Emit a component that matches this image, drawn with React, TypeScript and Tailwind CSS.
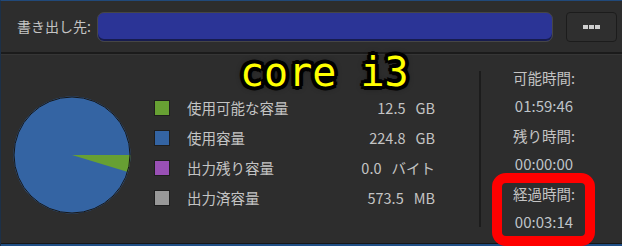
import React from "react";

const jp = "font-['Noto_Sans_CJK_JP','Noto_Sans',sans-serif]";

type LegendRow = { color: string; label: string; value: string; unit: string };

const legend: LegendRow[] = [
  { color: "bg-[#67a033]", label: "使用可能な容量", value: "12.5", unit: "GB" },
  { color: "bg-[#3464a3]", label: "使用容量", value: "224.8", unit: "GB" },
  { color: "bg-[#9950b5]", label: "出力残り容量", value: "0.0", unit: "バイト" },
  { color: "bg-[#989898]", label: "出力済容量", value: "573.5", unit: "MB" },
];

const times = [
  { label: "可能時間:", value: "01:59:46" },
  { label: "残り時間:", value: "00:00:00" },
  { label: "経過時間:", value: "00:03:14" },
];

function Pie() {
  // green slice from 0deg clockwise to ~17deg
  const cx = 59;
  const cy = 59;
  const r = 58.5;
  const a = (17 * Math.PI) / 180;
  const x2 = cx + r * Math.cos(a);
  const y2 = cy + r * Math.sin(a);
  return (
    <svg width="118" height="118" viewBox="0 0 118 118">
      <circle cx={cx} cy={cy} r={r} fill="#3464a3" />
      <path d={`M${cx} ${cy} L${cx + r} ${cy} A${r} ${r} 0 0 1 ${x2} ${y2} Z`} fill="#67a033" />
      <circle cx={cx} cy={cy} r={r - 0.5} fill="none" stroke="#161616" strokeWidth="1" />
    </svg>
  );
}

export default function App() {
  return (
    <div className={`relative w-[622px] h-[246px] overflow-hidden bg-[#2d2d2d] ${jp}`}>
      <div className="flex flex-col h-full border-t border-t-[#21497a] border-l border-l-[#1c3048]">
        {/* Output destination */}
        <div className="flex items-center h-[53px] pl-[16px] border-b-2 border-b-[#1b1b1b]">
          <span className="text-[14px] text-[#c4c4c4] w-[80px]">書き出し先:</span>
          <div className="w-[456px] h-[30px] rounded-[7px] border border-[#464646] bg-[#2b3496] shadow-[inset_0_-2px_0_#171c4f]" />
          <button className="ml-[13px] w-[51px] h-[30px] rounded-[4px] border border-[#1c1c1c] bg-[#2f2f2f] flex items-center justify-center gap-[1px]">
            <span className="w-[5px] h-[4px] bg-[#cfcfcf]" />
            <span className="w-[5px] h-[4px] bg-[#cfcfcf]" />
            <span className="w-[5px] h-[4px] bg-[#cfcfcf]" />
          </button>
        </div>

        {/* Capacity panel */}
        <div className="flex flex-1 items-start pl-[12px] border-t border-t-[#363636] border-b border-b-[#171717]">
          <div className="mt-[41px]">
            <Pie />
          </div>

          <div className="mt-[38px] ml-[23px] w-[281px]">
            {legend.map((row) => (
              <div key={row.label} className="flex items-center h-[30px]">
                <span className={`w-[16px] h-[16px] border border-[#1e1e1e] ${row.color}`} />
                <span className="ml-[17px] text-[14.5px] text-[#c4c4c4]">{row.label}</span>
                <span className="ml-auto text-[14.5px] text-[#c4c4c4] whitespace-nowrap">
                  {row.value}
                  <span className="ml-[10px]">{row.unit}</span>
                </span>
              </div>
            ))}
          </div>

          <div className="mt-[16px] ml-[44px] w-[2px] h-[156px] bg-[#1c1c1c]" />

          <div className="mt-[8px] ml-[11px] w-[104px] flex flex-col items-center">
            {times.map((t) => (
              <React.Fragment key={t.label}>
                <div className="h-[29px] flex items-center text-[14.5px] text-[#c4c4c4]">{t.label}</div>
                <div className="h-[29px] flex items-center text-[15px] text-[#bfc4c9]">{t.value}</div>
              </React.Fragment>
            ))}
          </div>
        </div>
        <div className="h-[2px] bg-[#1f4f86]" />
      </div>

      {/* annotations */}
      <div className="absolute left-[240px] top-[52px] font-['DejaVu_Sans_Mono',monospace] text-[40px] leading-none text-[#ffff00] whitespace-pre [text-shadow:4px_0_0_#000,-4px_0_0_#000,0_4px_0_#000,0_-4px_0_#000,3px_3px_0_#000,-3px_-3px_0_#000,3px_-3px_0_#000,-3px_3px_0_#000,0_0_7px_#000]">
        core i3
      </div>
      <div className="absolute left-[492px] top-[173px] w-[103px] h-[73px] rounded-[14px] border-[10px] border-[#ff0000]" />
    </div>
  );
}
